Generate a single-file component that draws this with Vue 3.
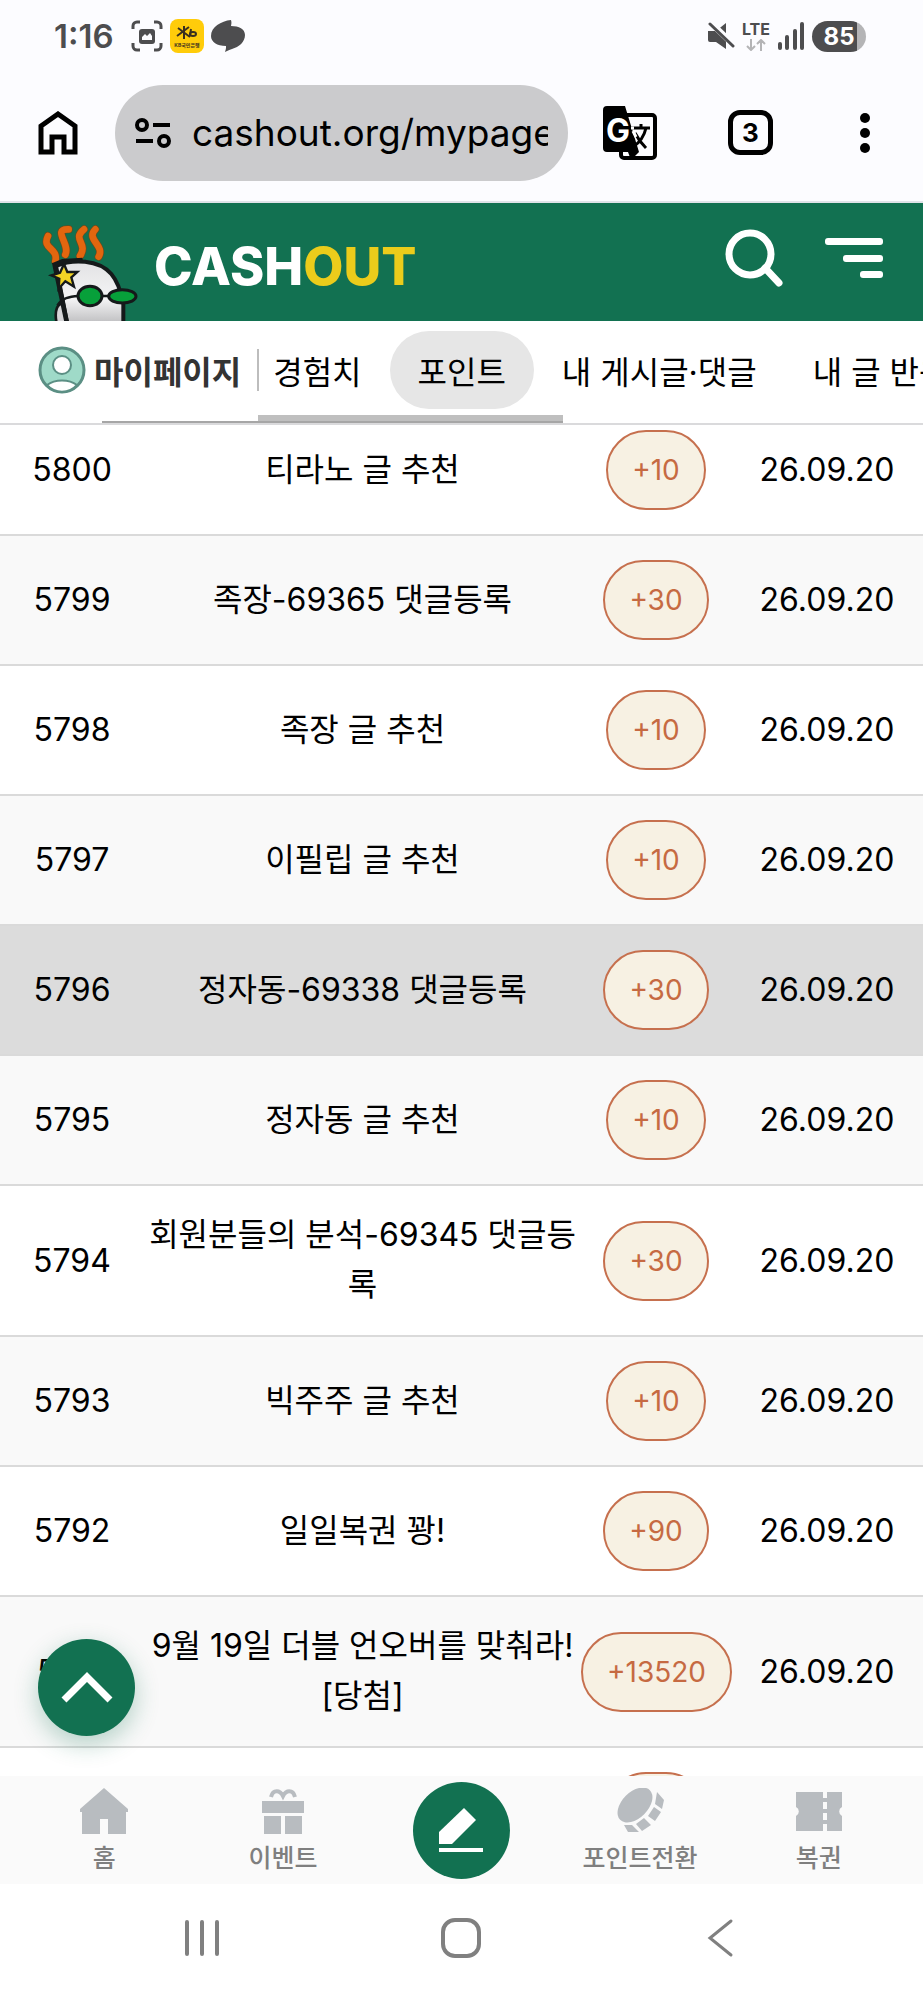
<script setup>
import { ref } from 'vue'

defineOptions({
  name: 'PointHistory',
})

const url = ref('cashout.org/mypage')
const activeTab = ref('포인트')
const selectedId = ref(5796)

const tabs = ['경험치', '포인트', '내 게시글·댓글', '내 글 반응']

const rows = [
  { id: 5800, title: '티라노 글 추천', point: '+10', date: '26.09.20' },
  { id: 5799, title: '족장-69365 댓글등록', point: '+30', date: '26.09.20' },
  { id: 5798, title: '족장 글 추천', point: '+10', date: '26.09.20' },
  { id: 5797, title: '이필립 글 추천', point: '+10', date: '26.09.20' },
  { id: 5796, title: '정자동-69338 댓글등록', point: '+30', date: '26.09.20' },
  { id: 5795, title: '정자동 글 추천', point: '+10', date: '26.09.20' },
  { id: 5794, title: '회원분들의 분석-69345 댓글등록', point: '+30', date: '26.09.20' },
  { id: 5793, title: '빅주주 글 추천', point: '+10', date: '26.09.20' },
  { id: 5792, title: '일일복권 꽝!', point: '+90', date: '26.09.20' },
  { id: 5791, title: '9월 19일 더블 언오버를 맞춰라! [당첨]', point: '+13520', date: '26.09.20' },
  { id: 5790, title: '', point: '+10', date: '' },
]
</script>

<template>
  <div class="screen">
    <div class="status-bar">
      <span class="clock">1:16</span>
      <svg class="status-icon" width="32" height="32" viewBox="0 0 32 32" fill="none">
        <path
          d="M2 9V6a4 4 0 0 1 4-4h3M23 2h3a4 4 0 0 1 4 4v3M30 23v3a4 4 0 0 1-4 4h-3M9 30H6a4 4 0 0 1-4-4v-3"
          stroke="#4d4d4f"
          stroke-width="3"
        />
        <rect x="8" y="9" width="16" height="15" rx="3" fill="#4d4d4f" />
        <path d="M11 20v-3l3-3 2 2 3-3 2 3v4z" fill="#fcfcff" />
      </svg>
      <svg class="status-icon" width="34" height="34" viewBox="0 0 34 34" fill="none">
        <rect width="34" height="34" rx="8" fill="#ffcc0a" />
        <path d="M14 7v13M8 9l12 9M19 8L7 17" stroke="#3a3020" stroke-width="2" />
        <path d="M21 10l-1 7" stroke="#3a3020" stroke-width="2" />
        <ellipse cx="23" cy="15" rx="3" ry="2" stroke="#3a3020" stroke-width="2" />
        <text x="17" y="28" text-anchor="middle" font-size="5" font-weight="700" fill="#3a3020">
          KB국민은행
        </text>
      </svg>
      <svg class="status-icon" width="34" height="32" viewBox="0 0 34 32">
        <path
          d="M20 0c1 3 0 5 0 6 8 0 14 3 14 9 0 7-6 12-13 14-3 1-5 2-7 3 1-3 1-4 1-6C6 26 0 22 0 16 0 7 10 1 20 0z"
          fill="#4d4d4f"
        />
      </svg>

      <div class="status-right">
        <svg width="28" height="28" viewBox="0 0 28 28">
          <path d="M1 9h8l10-8v26l-10-7H3a2 2 0 0 1-2-2z" fill="#4d4d4f" />
          <path d="M3 0l25 24" stroke="#fcfcff" stroke-width="6" />
          <path d="M3 2l23 22" stroke="#4d4d4f" stroke-width="3" stroke-linecap="round" />
        </svg>
        <div class="network">
          <span>LTE</span>
          <svg width="20" height="12" viewBox="0 0 20 12" fill="none">
            <path
              d="M5 0v11M1 7l4 4 4-4M15 12V1M11 5l4-4 4 4"
              stroke="#b4b4b6"
              stroke-width="2"
            />
          </svg>
        </div>
        <svg width="28" height="30" viewBox="0 0 28 30" fill="#4d4d4f">
          <rect x="1" y="21" width="4" height="8" rx="2" />
          <rect x="8" y="14" width="4" height="15" rx="2" />
          <rect x="16" y="8" width="4" height="21" rx="2" />
          <rect x="23" y="1" width="4" height="28" rx="2" />
        </svg>
        <span class="battery">85</span>
      </div>
    </div>

    <div class="toolbar">
      <button class="icon-button" aria-label="홈">
        <svg width="40" height="44" viewBox="0 0 40 44" fill="none">
          <path
            d="M3 15L20 3l17 12v26H26V26H14v15H3z"
            stroke="#000"
            stroke-width="5"
          />
        </svg>
      </button>
      <div class="address">
        <svg class="site-icon" width="36" height="32" viewBox="0 0 36 32" fill="none">
          <g stroke="#000" stroke-width="4">
            <circle cx="7" cy="8" r="5" />
            <path d="M18 8h17M1 24h17" />
            <circle cx="29" cy="24" r="5" />
          </g>
        </svg>
        <input v-model="url" class="address-input" type="text" aria-label="주소" />
      </div>
      <button class="icon-button" aria-label="번역">
        <svg width="54" height="54" viewBox="0 0 54 54">
          <rect x="18" y="9" width="34" height="43" rx="3" fill="#fcfcff" stroke="#000" stroke-width="4" />
          <path d="M4 0h18l14 46-8 8-3-8H4a4 4 0 0 1-4-4V4a4 4 0 0 1 4-4z" fill="#000" />
          <text class="g-mark" x="15" y="36" text-anchor="middle" fill="#fff">G</text>
          <path d="M38 18v4M28 22h19M43 22c-2 9-7 15-13 19M32 27c3 6 6 10 11 15" fill="none" stroke="#000" stroke-width="3" />
          <path d="M28 22h3M30 25l3 6" fill="none" stroke="#fff" stroke-width="3" />
        </svg>
      </button>
      <button class="tab-count" aria-label="탭">3</button>
      <button class="icon-button" aria-label="메뉴">
        <svg width="10" height="40" viewBox="0 0 10 40">
          <circle cx="5" cy="5" r="5" />
          <circle cx="5" cy="20" r="5" />
          <circle cx="5" cy="35" r="5" />
        </svg>
      </button>
    </div>

    <header class="site-header">
      <a class="brand" href="#">
        <svg class="mascot" width="98" height="96" viewBox="60 45 294 288" fill="none">
          <defs>
            <linearGradient id="face" x1="0" y1="0" x2="0" y2="1">
              <stop offset="0" stop-color="#e2e2e4" />
              <stop offset="0.6" stop-color="#f4f4f5" />
              <stop offset="1" stop-color="#bdbdbf" />
            </linearGradient>
          </defs>
          <g stroke-linecap="round">
            <g stroke="#6b4a1c" stroke-width="24">
              <path d="M84 78C64 118 116 112 106 154" />
              <path d="M146 58C94 56 152 104 136 134" />
              <path d="M192 58C154 88 206 100 180 138" />
              <path d="M226 58C196 88 256 106 236 140" />
            </g>
            <g stroke="#e2660f" stroke-width="20">
              <path d="M84 78C64 118 116 112 106 154" />
              <path d="M146 58C94 56 152 104 136 134" />
              <path d="M192 58C154 88 206 100 180 138" />
              <path d="M226 58C196 88 256 106 236 140" />
            </g>
          </g>
          <path
            d="M132 280c-20-2-30 22-22 60h30z"
            fill="#d5d5d7"
            stroke="#15191a"
            stroke-width="8"
          />
          <path
            d="M108 168c50-22 128-20 166 24 22 26 30 58 36 88v62H142z"
            fill="url(#face)"
            stroke="#15191a"
            stroke-width="12"
          />
          <path d="M98 166l30-12 60-4M104 164l36 172" stroke="#15191a" stroke-width="14" />
          <path d="M112 286c14-22 36-26 64-28M246 258h24" stroke="#15191a" stroke-width="7" />
          <path
            d="M132 162l10 24 30 0-18 16 8 28-26-16-20 22 2-30-24-10 26-8z"
            fill="#f2d325"
            stroke="#15191a"
            stroke-width="7"
          />
          <ellipse cx="210" cy="258" rx="36" ry="29" fill="#07a03a" stroke="#15191a" stroke-width="9" />
          <ellipse cx="307" cy="259" rx="41" ry="20" fill="#07a03a" stroke="#15191a" stroke-width="9" />
        </svg>
        <span class="brand-name">CASH<em>OUT</em></span>
      </a>
      <button class="icon-button" aria-label="검색">
        <svg width="58" height="58" viewBox="0 0 58 58" fill="none">
          <circle cx="25" cy="25" r="21" stroke="#fff" stroke-width="7" />
          <path d="M40 39l14 15" stroke="#fff" stroke-width="7" stroke-linecap="round" />
        </svg>
      </button>
      <button class="icon-button" aria-label="전체 메뉴">
        <svg width="58" height="42" viewBox="0 0 58 42" fill="#fff">
          <rect x="0" y="1" width="58" height="7" rx="3" />
          <rect x="18" y="18" width="40" height="7" rx="3" />
          <rect x="35" y="34" width="23" height="7" rx="3" />
        </svg>
      </button>
    </header>

    <nav class="page-nav">
      <a class="page-title" href="#">
        <svg width="48" height="48" viewBox="0 0 48 48">
          <circle cx="24" cy="24" r="22" fill="#9fdac8" stroke="#5b8f84" stroke-width="3" />
          <circle cx="24" cy="19" r="9" fill="#fff" stroke="#5b8f84" stroke-width="2" />
          <path d="M9 39c8-6 22-6 30 0-8 9-22 9-30 0z" fill="#fff" stroke="#5b8f84" stroke-width="2" />
        </svg>
        마이페이지
      </a>
      <div class="tabs">
        <button
          v-for="tab in tabs"
          :key="tab"
          class="tab"
          :class="{ active: tab === activeTab }"
          @click="activeTab = tab"
        >
          {{ tab }}
        </button>
      </div>
      <span class="thumb thumb-tabs"></span>
      <span class="thumb thumb-table"></span>
    </nav>

    <main class="content">
      <div class="history-view">
        <table class="history">
          <colgroup>
            <col class="col-id" />
            <col />
            <col class="col-point" />
            <col class="col-date" />
          </colgroup>
          <tbody>
            <tr
              v-for="row in rows"
              :key="row.id"
              :class="{ selected: row.id === selectedId }"
              @click="selectedId = row.id"
            >
              <td>{{ row.id }}</td>
              <td class="title">{{ row.title }}</td>
              <td>
                <span class="badge">{{ row.point }}</span>
              </td>
              <td>{{ row.date }}</td>
            </tr>
          </tbody>
        </table>
      </div>
      <button class="to-top" aria-label="맨 위로">
        <svg width="52" height="32" viewBox="0 0 52 32" fill="none">
          <path d="M3 28L26 5l23 23" stroke="#fff" stroke-width="7" />
        </svg>
      </button>
    </main>

    <nav class="bottom-nav">
      <a class="bottom-item" href="#">
        <svg width="48" height="46" viewBox="0 0 48 46" fill="#b8bcc0">
          <path d="M24 0l24 21v3h-2v22H28V31h-8v15H2V24H0v-3z" />
        </svg>
        홈
      </a>
      <a class="bottom-item" href="#">
        <svg width="48" height="46" viewBox="0 0 48 46" fill="#b8bcc0">
          <path d="M12 9c2-8 9-7 12-1 3-6 10-7 12 1" fill="none" stroke="#b8bcc0" stroke-width="4" />
          <rect x="3" y="13" width="42" height="12" />
          <rect x="5" y="28" width="17" height="18" />
          <rect x="26" y="28" width="17" height="18" />
        </svg>
        이벤트
      </a>
      <button class="write" aria-label="글쓰기">
        <svg width="44" height="46" viewBox="0 0 44 46" fill="#fff">
          <path d="M0 25L25 1l12 12-24 24H0z" />
          <rect y="41" width="44" height="4" />
        </svg>
      </button>
      <a class="bottom-item" href="#">
        <svg width="48" height="46" viewBox="-2 0 48 46" fill="#b8bcc0">
          <ellipse cx="17" cy="17" rx="21" ry="13" transform="rotate(-45 17 17)" />
          <path d="M39 4l7 8-2 9-7-5zM36 19l7 5-6 9-7-5zM26 30l7 7-9 6-6-7zM6 37l8 0 7 7-11 0z" />
        </svg>
        포인트전환
      </a>
      <a class="bottom-item" href="#">
        <svg width="48" height="46" viewBox="0 0 48 46">
          <path d="M1 4h46v15a5 5 0 0 0 0 9v15H1V28a5 5 0 0 0 0-9z" fill="#b8bcc0" />
          <path d="M30 3v41" stroke="#fafafa" stroke-width="4" stroke-dasharray="7 4" />
        </svg>
        복권
      </a>
    </nav>

    <div class="system-nav">
      <button class="icon-button" aria-label="최근 앱">
        <svg width="40" height="40" viewBox="0 0 40 40" stroke="#808080" stroke-width="4" stroke-linecap="round">
          <path d="M5 4v32M20 4v32M35 4v32" />
        </svg>
      </button>
      <button class="icon-button" aria-label="홈 화면">
        <svg width="40" height="40" viewBox="0 0 40 40" fill="none">
          <rect x="2" y="2" width="36" height="36" rx="12" stroke="#808080" stroke-width="4" />
        </svg>
      </button>
      <button class="icon-button" aria-label="뒤로">
        <svg width="40" height="40" viewBox="0 0 40 40" fill="none">
          <path d="M30 3L9 20l21 17" stroke="#808080" stroke-width="3" stroke-linecap="round" />
        </svg>
      </button>
    </div>
  </div>
</template>

<style>
body {
  margin: 0;
}
</style>

<style scoped>
.screen {
  display: flex;
  flex-direction: column;
  height: 100vh;
  background: #fff;
  color: #000;
  font-family: Inter, 'Noto Sans CJK KR', sans-serif;
}

button {
  padding: 0;
  border: none;
  background: none;
  color: inherit;
  font-family: inherit;
  cursor: pointer;
}

a {
  color: inherit;
  text-decoration: none;
}

svg {
  display: block;
  flex-shrink: 0;
}

.icon-button {
  flex-shrink: 0;
}

/* phone status bar */
.status-bar {
  display: flex;
  align-items: center;
  gap: 7px;
  height: 72px;
  padding: 0 57px 0 54px;
  background: #fcfcff;
  color: #4d4d4f;
}

.clock {
  margin-right: 10px;
  font-size: 33px;
  font-weight: 600;
}

.status-right {
  display: flex;
  align-items: center;
  gap: 7px;
  margin-left: auto;
}

.network {
  display: flex;
  flex-direction: column;
  align-items: center;
  gap: 2px;
  font-size: 16px;
  font-weight: 700;
  line-height: 16px;
}

.battery {
  width: 54px;
  border-radius: 16px;
  background: linear-gradient(90deg, #4d4d4f 84%, #b4b4b6 84%);
  color: #fff;
  font-size: 24px;
  font-weight: 700;
  line-height: 31px;
  text-align: center;
}

/* browser toolbar */
.toolbar {
  display: flex;
  align-items: center;
  height: 131px;
  padding: 0 53px 8px 38px;
  box-sizing: border-box;
  border-bottom: 2px solid #dfe3e8;
  background: #fcfcff;
}

.address {
  display: flex;
  flex: 1;
  align-items: center;
  gap: 21px;
  min-width: 0;
  height: 96px;
  margin: 0 35px 0 37px;
  padding: 0 20px;
  box-sizing: border-box;
  border-radius: 48px;
  background: #cbcbcd;
}

.address-input {
  flex: 1;
  min-width: 0;
  padding: 0;
  border: none;
  outline: none;
  background: none;
  color: #000;
  font-family: inherit;
  font-size: 37px;
}

.g-mark {
  font-size: 32px;
  font-weight: 700;
}

.tab-count {
  flex-shrink: 0;
  width: 45px;
  height: 45px;
  margin: 0 87px 0 71px;
  border: 5px solid #000;
  border-radius: 12px;
  font-size: 26px;
  font-weight: 700;
}

/* site header */
.site-header {
  display: flex;
  align-items: center;
  gap: 42px;
  height: 118px;
  padding: 0 40px;
  box-sizing: border-box;
  background: #127151;
}

.site-header .icon-button {
  margin-bottom: 8px;
}

.brand {
  display: flex;
  flex: 1;
  align-items: center;
  align-self: flex-end;
  gap: 16px;
}

.brand-name {
  padding-bottom: 12px;
  color: #fff;
  font-size: 52px;
  font-weight: 800;
  line-height: 64px;
}

.brand-name em {
  color: #ebcc1b;
  font-style: normal;
}

/* my page tabs */
.page-nav {
  position: relative;
  display: flex;
  align-items: center;
  height: 104px;
  padding-left: 38px;
  padding-bottom: 4px;
  box-sizing: border-box;
  border-bottom: 2px solid #dadadc;
  font-size: 32px;
  overflow: hidden;
}

.page-title {
  display: flex;
  flex-shrink: 0;
  align-items: center;
  gap: 8px;
  height: 42px;
  padding-right: 16px;
  border-right: 2px solid #bdbdbd;
  color: #333;
  font-weight: 700;
  white-space: nowrap;
}

.tabs {
  display: flex;
  flex: 1;
  min-width: 0;
  margin-left: -14px;
  overflow: hidden;
}

.tab {
  flex-shrink: 0;
  height: 78px;
  padding: 0 28px;
  border-radius: 39px;
  font-size: 32px;
  white-space: nowrap;
}

.tab.active {
  background: #e6e6e6;
}

.thumb {
  position: absolute;
  bottom: 0;
}

.thumb-tabs {
  left: 28%;
  width: 33%;
  height: 8px;
  background: #bfbfbf;
}

.thumb-table {
  left: 11%;
  width: 50%;
  height: 2px;
  background: #a6a6a6;
}

/* point history, scrolled part of a row past the tabs */
.content {
  position: relative;
  flex: 1;
  min-height: 0;
}

.history-view {
  height: 100%;
  overflow: hidden;
}

.history {
  width: 100%;
  margin-top: -19px;
  border-spacing: 0;
  table-layout: fixed;
  font-size: 32px;
  line-height: 50px;
  text-align: center;
}

.col-id {
  width: 144px;
}

.col-point {
  width: 150px;
}

.col-date {
  width: 192px;
}

.history td {
  height: 130px;
  padding: 0;
  box-sizing: border-box;
  border-bottom: 2px solid #dadada;
}

.history .title {
  padding: 24px 2px 25px;
  word-break: break-all;
}

.history tr:nth-child(even) td {
  background: #f9f9f9;
}

.history .selected td {
  background: #dcdcdc;
}

.badge {
  display: inline-block;
  padding: 0 24px;
  border: 2px solid #c6704e;
  border-radius: 40px;
  background: #f7f1e3;
  color: #c66a42;
  font-size: 28px;
  line-height: 76px;
  vertical-align: middle;
}

.to-top {
  position: absolute;
  bottom: 40px;
  left: 38px;
  display: flex;
  align-items: center;
  justify-content: center;
  width: 97px;
  height: 97px;
  border-radius: 50%;
  background: #127151;
  box-shadow: 0 8px 24px rgba(18, 113, 81, 0.3);
}

/* site bottom bar */
.bottom-nav {
  display: grid;
  grid-template-columns: repeat(5, 1fr);
  align-items: center;
  height: 108px;
  padding: 0 15px;
  background: #fafafa;
  color: #7f7f7f;
}

.bottom-item {
  display: flex;
  flex-direction: column;
  align-items: center;
  gap: 8px;
  padding-top: 2px;
  font-size: 25px;
  font-weight: 500;
  line-height: 32px;
  white-space: nowrap;
}

.write {
  display: flex;
  align-items: center;
  justify-content: center;
  justify-self: center;
  width: 97px;
  height: 97px;
  border-radius: 50%;
  background: #127151;
}

/* system navigation */
.system-nav {
  display: grid;
  grid-template-columns: repeat(3, 1fr);
  align-items: center;
  justify-items: center;
  height: 116px;
  padding: 0 72px 8px;
  box-sizing: border-box;
}
</style>
